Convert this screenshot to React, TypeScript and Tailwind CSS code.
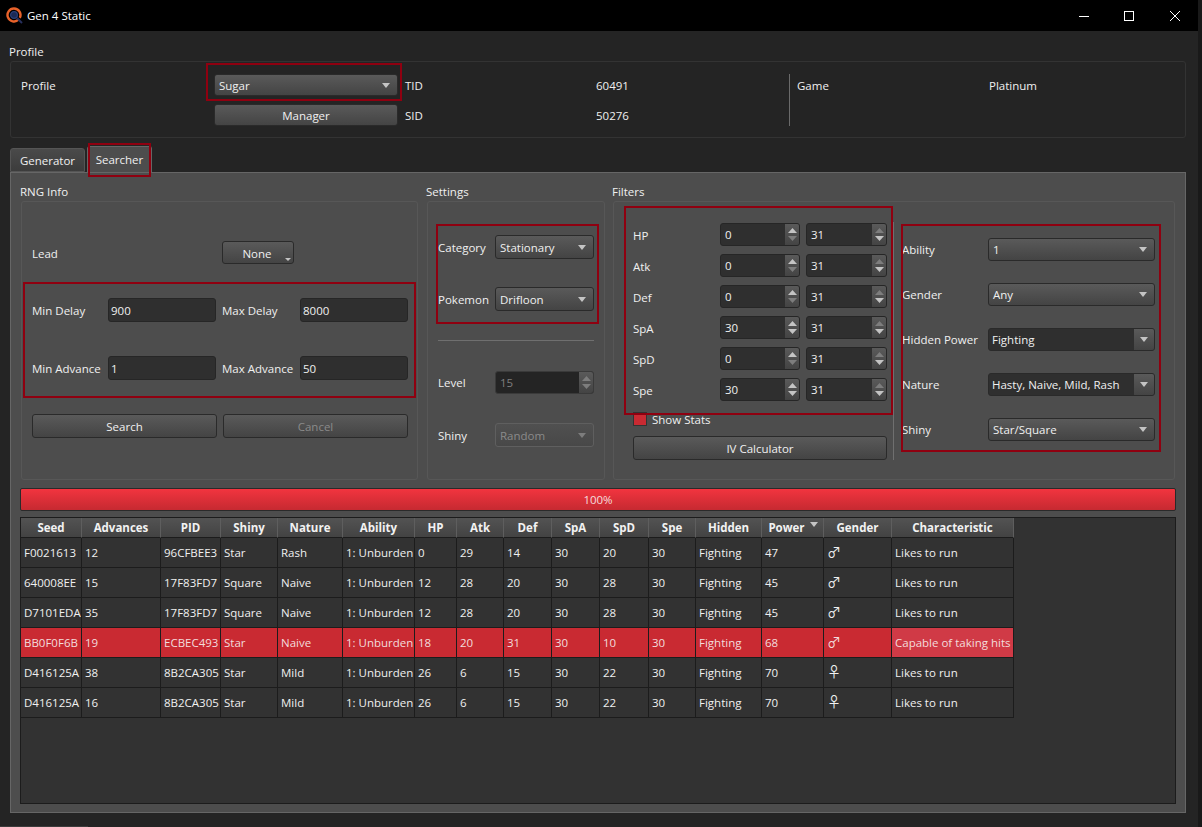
const rows = [
  ["F0021613", "12", "96CFBEE3", "Star", "Rash", "1: Unburden", "0", "29", "14", "30", "20", "30", "Fighting", "47", "♂", "Likes to run"],
  ["640008EE", "15", "17F83FD7", "Square", "Naive", "1: Unburden", "12", "28", "20", "30", "28", "30", "Fighting", "45", "♂", "Likes to run"],
  ["D7101EDA", "35", "17F83FD7", "Square", "Naive", "1: Unburden", "12", "28", "20", "30", "28", "30", "Fighting", "45", "♂", "Likes to run"],
  ["BB0F0F6B", "19", "ECBEC493", "Star", "Naive", "1: Unburden", "18", "20", "31", "30", "10", "30", "Fighting", "68", "♂", "Capable of taking hits"],
  ["D416125A", "38", "8B2CA305", "Star", "Mild", "1: Unburden", "26", "6", "15", "30", "22", "30", "Fighting", "70", "♀", "Likes to run"],
  ["D416125A", "16", "8B2CA305", "Star", "Mild", "1: Unburden", "26", "6", "15", "30", "22", "30", "Fighting", "70", "♀", "Likes to run"],
];

const columns = [
  { name: "Seed", w: "w-[61px]" },
  { name: "Advances", w: "w-[79px]" },
  { name: "PID", w: "w-[60px]" },
  { name: "Shiny", w: "w-[57px]" },
  { name: "Nature", w: "w-[65px]" },
  { name: "Ability", w: "w-[72px]" },
  { name: "HP", w: "w-[42px]" },
  { name: "Atk", w: "w-[47px]" },
  { name: "Def", w: "w-[48px]" },
  { name: "SpA", w: "w-[48px]" },
  { name: "SpD", w: "w-[49px]" },
  { name: "Spe", w: "w-[47px]" },
  { name: "Hidden", w: "w-[66px]" },
  { name: "Power", w: "w-[62px]" },
  { name: "Gender", w: "w-[68px]" },
  { name: "Characteristic", w: "w-[122px]" },
];

const annotations = [
  "left-[206px] top-[63px] w-[196px] h-[38px]",
  "left-[88px] top-[143px] w-[63px] h-[34px]",
  "left-[23px] top-[282px] w-[393px] h-[116px]",
  "left-[436px] top-[224px] w-[163px] h-[100px]",
  "left-[624px] top-[206px] w-[269px] h-[209px]",
  "left-[901px] top-[224px] w-[260px] h-[228px]",
];

const buttonFace = "bg-gradient-to-b from-[#5a5a5a] to-[#444444] rounded-[3px] border border-[#2a2a2a]";

function Arrow({ dim = false, up = false, size = 8 }: { dim?: boolean; up?: boolean; size?: number }) {
  return (
    <svg width={size} height="5" viewBox="0 0 9 5" preserveAspectRatio="none" className="shrink-0">
      <path d={up ? "M0 5 L4.5 0 L9 5 Z" : "M0 0 H9 L4.5 5 Z"} fill={dim ? "#7d7d7d" : "#c4c4c4"} />
    </svg>
  );
}

function Combo({ text, w, h = "h-[24px]", disabled = false }: { text: string; w: string; h?: string; disabled?: boolean }) {
  return (
    <div className={`${w} ${h} ${buttonFace} flex items-center justify-between pl-[4px] pr-[7px] ${disabled ? "text-[#8a8a8a] border-[#5f5f5f] from-[#505050] to-[#484848]" : ""}`}>
      <span className="pt-px">{text}</span>
      <Arrow dim={disabled} />
    </div>
  );
}

function EditCombo({ text }: { text: string }) {
  return (
    <div className="w-[167px] h-[23px] flex rounded-[3px] border border-[#2a2a2a] bg-[#2f2f2f]">
      <span className="flex-1 pl-[3px] leading-[22px]">{text}</span>
      <div className="w-[20px] flex items-center justify-center bg-gradient-to-b from-[#5a5a5a] to-[#444444] rounded-r-[2px]">
        <Arrow />
      </div>
    </div>
  );
}

function Input({ value }: { value: string }) {
  return <div className="w-[108px] h-[24px] pl-[2px] leading-[24px] bg-[#2f2f2f] border border-[#262626] rounded-[3px]">{value}</div>;
}

function Spin({ value, w = "w-[80px]", disabled = false, upDim = false, downDim = false }: { value: string; w?: string; disabled?: boolean; upDim?: boolean; downDim?: boolean }) {
  return (
    <div className={`${w} h-[23px] flex rounded-[3px] border ${disabled ? "bg-[#242424] border-[#3a3a3a] text-[#7f7f7f]" : "bg-[#2f2f2f] border-[#262626]"}`}>
      <span className="flex-1 pl-[4px] leading-[22px]">{value}</span>
      <div className="w-[14px] flex flex-col items-center justify-center gap-[3px] bg-gradient-to-b from-[#5a5a5a] to-[#444444] rounded-r-[2px]">
        <Arrow up dim={disabled || upDim} size={9} />
        <Arrow dim={disabled || downDim} size={9} />
      </div>
    </div>
  );
}

function Button({ text, w, disabled = false }: { text: string; w: string; disabled?: boolean }) {
  return (
    <div className={`${w} h-[24px] ${buttonFace} flex items-center justify-center pt-px ${disabled ? "text-[#8a8a8a]" : ""}`}>{text}</div>
  );
}

function Logo() {
  return (
    <svg width="17" height="17" viewBox="0 0 17 17" className="shrink-0">
      <path d="M8 1.5a6.5 6.5 0 1 0 4.5 11.2" fill="none" stroke="#e8622a" strokeWidth="2.4" />
      <path d="M8 1.5a6.5 6.5 0 0 1 5.8 9.4" fill="none" stroke="#e8622a" strokeWidth="2.4" />
      <circle cx="8" cy="8" r="3.4" fill="#1c2a55" stroke="#2a3f7a" strokeWidth="1.2" />
      <path d="M11 11 L16 16" stroke="#27305e" strokeWidth="2" />
    </svg>
  );
}

function TitleBar() {
  return (
    <div className="h-[31px] bg-black flex items-center pl-[6px] text-white">
      <Logo />
      <span className="ml-[4px]">Gen 4 Static</span>
      <div className="ml-auto flex items-center">
        <svg width="10" height="10" viewBox="0 0 10 10" className="mr-[35px]">
          <path d="M0 5.5 H10" stroke="#fff" strokeWidth="1" />
        </svg>
        <svg width="10" height="10" viewBox="0 0 10 10" className="mr-[36px]">
          <rect x="0.5" y="0.5" width="9" height="9" fill="none" stroke="#fff" strokeWidth="1" />
        </svg>
        <svg width="10" height="10" viewBox="0 0 10 10" className="mr-[18px]">
          <path d="M0 0 L10 10 M10 0 L0 10" stroke="#fff" strokeWidth="1" />
        </svg>
      </div>
    </div>
  );
}

function ProfileGroup() {
  return (
    <div className="ml-[10px] w-[1176px] h-[77px] border border-[#333333] rounded-[3px] pl-[10px] pt-[12px] grid grid-cols-[193px_191px_191px_193px_8px_192px_1fr] grid-rows-[22px_22px] gap-y-[8px] items-center">
      <span className="pt-px">Profile</span>
      <Combo text="Sugar" w="w-[184px]" h="h-[22px]" />
      <span className="pt-px">TID</span>
      <span className="pt-px">60491</span>
      <div className="row-span-2 w-px h-[52px] bg-[#6a6a6a]" />
      <span className="pt-px">Game</span>
      <span className="pt-px">Platinum</span>
      <span />
      <div className="w-[184px] h-[22px] bg-gradient-to-b from-[#5a5a5a] to-[#444444] rounded-[3px] border border-[#2a2a2a] flex items-center justify-center pt-px">Manager</div>
      <span className="pt-px">SID</span>
      <span className="pt-px">50276</span>
    </div>
  );
}

function ResultsTable() {
  return (
    <div className="ml-[9px] mt-[6px] w-[1156px] h-[287px] bg-[#323232] border border-[#1c1c1c] overflow-hidden">
      <table className="table-fixed border-separate border-spacing-0 w-[993px]">
        <thead>
          <tr className="h-[20px] bg-gradient-to-b from-[#535353] to-[#424242]">
            {columns.map((c) => (
              <th key={c.name} className={`${c.w} relative p-0 pt-px font-bold text-[#f2f2f2] text-center border-r border-b border-r-[#5e5e5e] border-b-[#1c1c1c]`}>
                {c.name === "Power" ? <span className="pr-[12px]">{c.name}</span> : c.name}
                {c.name === "Power" ? (
                  <span className="absolute right-[5px] top-[4px] flex">
                    <Arrow />
                  </span>
                ) : null}
              </th>
            ))}
          </tr>
        </thead>
        <tbody>
          {rows.map((row, i) => (
            <tr key={i} className={i === 3 ? "h-[30px] bg-[#c92a32] text-[#f3dcdc]" : "h-[30px]"}>
              {row.map((cell, j) => (
                <td
                  key={j}
                  className={`p-0 pl-[3px] whitespace-nowrap overflow-hidden border-r border-b border-[#1c1c1c] ${i === 3 && j === 15 ? "bg-[#d03a46]" : ""}`}
                >
                  {j === 14 ? <span className="text-[14px] leading-[15px] font-['Noto_Sans_CJK_JP',sans-serif]">{cell}</span> : cell}
                </td>
              ))}
            </tr>
          ))}
        </tbody>
      </table>
    </div>
  );
}

function Searcher() {
  return (
    <div className="w-[1176px] h-[641px] ml-[10px] bg-[#4d4d4d] border border-[#666666]">
      <div className="flex pl-[9px] pt-[10px]">
        <div className="w-[398px]">
          <div className="h-[18px] leading-[18px]">RNG Info</div>
          <div className="ml-px h-[279px] border border-[#575757] rounded-[3px] pl-[10px] pt-[39px]">
            <div className="flex items-center h-[23px]">
              <span className="w-[190px] pt-[2px]">Lead</span>
              <div className={`relative w-[72px] h-[23px] ${buttonFace} flex items-center justify-center pr-[2px] pt-[2px]`}>
                None
                <span className="absolute right-[2px] bottom-[2px] flex">
                  <svg width="6" height="3" viewBox="0 0 6 3"><path d="M0 0 H6 L3 3 Z" fill="#c4c4c4" /></svg>
                </span>
              </div>
            </div>
            <div className="flex items-center mt-[34px]">
              <span className="w-[76px] pt-px">Min Delay</span>
              <Input value="900" />
              <span className="w-[78px] ml-[6px] pt-px">Max Delay</span>
              <Input value="8000" />
            </div>
            <div className="flex items-center mt-[34px]">
              <span className="w-[76px] pt-px">Min Advance</span>
              <Input value="1" />
              <span className="w-[78px] ml-[6px] pt-px">Max Advance</span>
              <Input value="50" />
            </div>
            <div className="flex mt-[34px] gap-[6px]">
              <Button text="Search" w="w-[185px]" />
              <Button text="Cancel" w="w-[185px]" disabled />
            </div>
          </div>
        </div>

        <div className="w-[179px] ml-[8px]">
          <div className="h-[18px] leading-[18px]">Settings</div>
          <div className="ml-px w-[178px] h-[279px] border border-[#575757] rounded-[3px] pl-[10px] pt-[33px]">
            <div className="flex items-center">
              <span className="w-[57px] pt-px">Category</span>
              <Combo text="Stationary" w="w-[99px]" />
            </div>
            <div className="flex items-center mt-[28px]">
              <span className="w-[57px] pt-px">Pokemon</span>
              <Combo text="Drifloon" w="w-[99px]" />
            </div>
            <div className="w-[156px] h-px bg-[#6f6f6f] mt-[29px]" />
            <div className="flex items-center mt-[30px]">
              <span className="w-[57px] pt-px">Level</span>
              <Spin value="15" w="w-[99px]" disabled />
            </div>
            <div className="flex items-center mt-[29px]">
              <span className="w-[57px] pt-px">Shiny</span>
              <Combo text="Random" w="w-[99px]" disabled />
            </div>
          </div>
        </div>

        <div className="w-[563px] ml-[7px]">
          <div className="h-[18px] leading-[18px]">Filters</div>
          <div className="ml-px w-[562px] h-[279px] border border-[#575757] rounded-[3px] pl-[19px] pt-[21px] flex">
            <div className="w-[254px]">
              <div className="flex flex-col gap-[8px]">
                {[
                  ["HP", "0"],
                  ["Atk", "0"],
                  ["Def", "0"],
                  ["SpA", "30"],
                  ["SpD", "0"],
                  ["Spe", "30"],
                ].map(([stat, min]) => (
                  <div key={stat} className="flex items-center">
                    <span className="w-[87px] pt-[2px]">{stat}</span>
                    <Spin value={min} downDim={min === "0"} />
                    <span className="w-[6px]" />
                    <Spin value="31" w="w-[81px]" upDim />
                  </div>
                ))}
              </div>
              <div className="flex items-center mt-[11px] h-[14px]">
                <div className="w-[14px] h-[14px] bg-[#c92a32] border border-[#333333]" />
                <span className="ml-[5px] pt-px">Show Stats</span>
              </div>
              <div className="mt-[10px]">
                <Button text="IV Calculator" w="w-[254px]" />
              </div>
            </div>
            <div className="w-px h-[238px] -mt-px ml-[6px] bg-[#6f6f6f]" />
            <div className="ml-[8px] pt-[15px] flex flex-col gap-[22px]">
              <div className="flex items-center"><span className="w-[86px] pt-px">Ability</span><Combo text="1" w="w-[167px]" h="h-[23px]" /></div>
              <div className="flex items-center"><span className="w-[86px] pt-px">Gender</span><Combo text="Any" w="w-[167px]" h="h-[23px]" /></div>
              <div className="flex items-center"><span className="w-[86px] pt-px">Hidden Power</span><EditCombo text="Fighting" /></div>
              <div className="flex items-center"><span className="w-[86px] pt-px">Nature</span><EditCombo text="Hasty, Naive, Mild, Rash" /></div>
              <div className="flex items-center"><span className="w-[86px] pt-px">Shiny</span><Combo text="Star/Square" w="w-[167px]" h="h-[23px]" /></div>
            </div>
          </div>
        </div>
      </div>

      <div className="ml-[9px] mt-[8px] w-[1156px] h-[23px] rounded-[2px] border border-[#2a2a2a] bg-gradient-to-b from-[#f2343f] to-[#c62a31] flex items-center justify-center text-[#f5dede]">
        100%
      </div>
      <ResultsTable />
    </div>
  );
}

export default function App() {
  return (
    <div className="relative w-[1202px] h-[827px] overflow-hidden flex bg-[#242424] text-[#f0f0f0] text-[11.5px] font-['Open_Sans',sans-serif]">
      <div className="w-[1198px]">
        <TitleBar />
        <div className="h-[30px] pl-[9px] pt-[12px] leading-[18px]">
          <span className="block h-[18px]">Profile</span>
        </div>
        <ProfileGroup />
        <div className="flex items-end h-[34px] ml-[10px] gap-[2px]">
          <div className="w-[75px] h-[24px] bg-gradient-to-b from-[#4a4a4a] to-[#3c3c3c] border border-[#555555] rounded-t-[3px] flex items-center justify-center pt-px">Generator</div>
          <div className="w-[65px] h-[26px] bg-[#4d4d4d] border border-b-0 border-[#666666] rounded-t-[3px] flex items-center justify-center">Searcher</div>
        </div>
        <Searcher />
        <div className="mt-[13px] w-[88px] h-px bg-[#3c3c3c]" />
      </div>
      <div className="w-[4px] bg-[#191919]" />
      {annotations.map((a) => (
        <div key={a} className={`absolute ${a} border-2 border-[#8f0010] pointer-events-none`} />
      ))}
    </div>
  );
}
